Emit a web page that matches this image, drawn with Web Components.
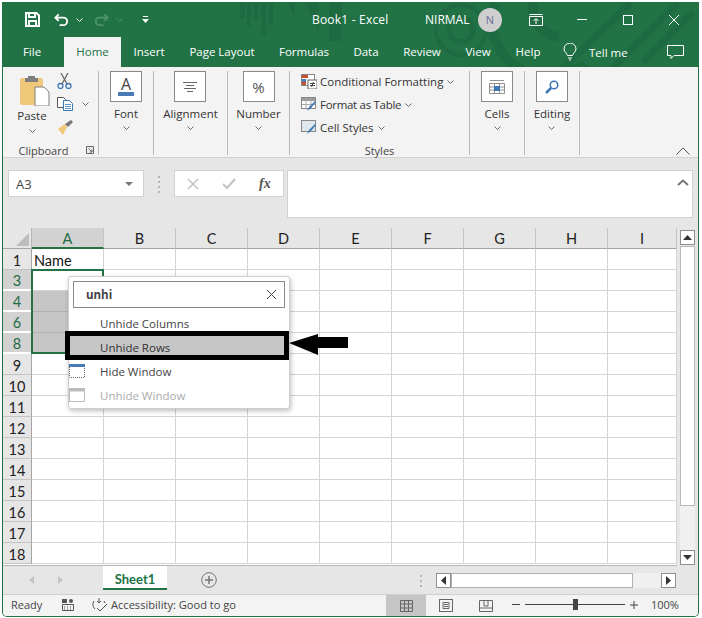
<!DOCTYPE html>
<html>
<head>
<meta charset="utf-8">
<title>Book1 - Excel</title>
<style>
  html, body { margin: 0; background: #fff; }
  body { width: 702px; height: 618px; overflow: hidden; font-family: "Open Sans", sans-serif; font-size: 11.5px; color: #333; }
</style>
</head>
<body>
<excel-window>
  <excel-titlebar></excel-titlebar>
  <excel-ribbon></excel-ribbon>
  <excel-formula-bar></excel-formula-bar>
  <excel-sheet></excel-sheet>
  <excel-sheet-tabs></excel-sheet-tabs>
  <excel-status-bar></excel-status-bar>
</excel-window>

<script>
const CHEV = `<svg width="7" height="4" viewBox="0 0 7 4"><path d="M.5.5l3 3 3-3" fill="none" stroke="#666"/></svg>`;

class ExcelWindow extends HTMLElement {
  constructor() {
    super();
    this.attachShadow({ mode: 'open' });
    this.shadowRoot.innerHTML = `
      <style>
        :host {
          display: flex;
          flex-direction: column;
          box-sizing: border-box;
          position: relative;
          width: 697px;
          height: 615px;
          margin: 2px 0 0 2px;
          border: 1px solid #217346;
          border-top: 0;
          border-radius: 0 0 5px 5px;
          overflow: hidden;
          background: #e6e6e6;
        }
      </style>
      <slot></slot>
    `;
  }
}

class ExcelTitlebar extends HTMLElement {
  constructor() {
    super();
    this.attachShadow({ mode: 'open' });
    const tabs = [['File', 58], ['Home', 57], ['Insert', 56], ['Page Layout', 90], ['Formulas', 74], ['Data', 50], ['Review', 62], ['View', 50], ['Help', 50]];
    this.shadowRoot.innerHTML = `
      <style>
        :host { display: block; position: relative; height: 65px; background: #217346; color: #fff; flex: none; }
        .art { position: absolute; left: 0; top: 0; }
        .top { position: relative; display: flex; align-items: center; height: 35px; }
        .qat { display: flex; align-items: center; margin-left: 22px; width: 285px; flex: none; }
        .title { width: 80px; flex: none; font-size: 12px; letter-spacing: .2px; white-space: nowrap; margin-left: 2px; }
        .user { margin-left: 33px; font-size: 12px; width: 53px; flex: none; }
        .avatar { width: 24px; height: 24px; border-radius: 50%; background: #cfcfcf; color: #6a6a9a; font-size: 11px;
          display: flex; align-items: center; justify-content: center; flex: none; }
        .win { display: flex; margin-left: 11px; align-items: center; }
        .win span { width: 46px; display: flex; justify-content: center; }
        .tabs { position: relative; display: flex; height: 30px; align-items: center; }
        .tab { height: 30px; line-height: 30px; text-align: center; font-size: 11.500px; flex: none; }
        .tab.on { background: #f3f3f3; color: #217346; margin-left: 3px; }
        .tell { display: flex; align-items: center; gap: 12px; margin-left: 10px; font-size: 11.500px; }
      </style>
      <svg class="art" width="695" height="65" fill="#1e6a41">
        <rect x="237" y="1" width="5" height="15"/><rect x="244" y="1" width="4" height="23"/><rect x="251" y="1" width="4" height="18"/>
        <rect x="258" y="1" width="5" height="33"/><rect x="266" y="1" width="4" height="22"/>
        <path d="M285 1h7v13zM303 1h13v30zM326 1h13v38h-13z"/>
        <g fill="none" stroke="#1e6a41">
          <circle cx="458" cy="28" r="12" stroke-width="5"/><circle cx="458" cy="28" r="25" stroke-width="4"/>
          <path d="M492 1a56 56 0 0 0 90 60M530 1a30 30 0 0 0 26 34" stroke-width="10"/>
          <path d="M560 66L628 1M610 66L675 1M640 60L690 10" stroke-width="7"/>
        </g>
      </svg>
      <div class="top">
        <div class="qat">
          <svg width="15" height="15" viewBox="0 0 15 15" fill="none" stroke="#fff" stroke-width="2"><path d="M1 1h10.500l2.500 2.500V14H1zM4 1v4h6V1M4 14V9h7v5"/></svg>
          <svg style="margin-left:14px" width="15" height="14" viewBox="0 0 16 14" fill="none" stroke="#fff" stroke-width="2"><path d="M5 1L1.500 4.500 5 8M2 4.500h8a4 4 0 0 1 0 8H6"/></svg>
          <svg style="margin-left:7px" width="7" height="4" viewBox="0 0 7 4"><path d="M.5.5l3 3 3-3" fill="none" stroke="#fff"/></svg>
          <svg style="margin-left:11px;opacity:.35" width="15" height="14" viewBox="0 0 16 14" fill="none" stroke="#9fd0b4" stroke-width="2"><path d="M11 1l3.500 3.500L11 8M14 4.500H6a4 4 0 0 0 0 8h4"/></svg>
          <svg style="margin-left:7px;opacity:.35" width="7" height="4" viewBox="0 0 7 4"><path d="M.5.5l3 3 3-3" fill="none" stroke="#9fd0b4"/></svg>
          <svg style="margin-left:19px" width="7" height="8" viewBox="0 0 7 8" fill="#fff"><rect x="1" width="5" height="1"/><path d="M0 3h7L3.500 7z"/></svg>
        </div>
        <span class="title">Book1 - Excel</span>
        <span class="user">NIRMAL</span>
        <span class="avatar">N</span>
        <div class="win">
          <span><svg width="14" height="12" viewBox="0 0 14 12" fill="none" stroke="#fff"><path d="M.5 2.500h13v9H.5zM.5.5h13M7 10V5M4.500 7L7 4.500 9.500 7"/></svg></span>
          <span><svg width="10" height="1"><rect width="10" height="1" fill="#fff"/></svg></span>
          <span><svg width="10" height="10" fill="none" stroke="#fff"><rect x=".5" y=".5" width="9" height="9"/></svg></span>
          <span><svg width="10" height="10" fill="none" stroke="#fff"><path d="M0 0l10 10M10 0L0 10"/></svg></span>
        </div>
      </div>
      <div class="tabs">
        ${tabs.map(([t, w]) => `<div class="tab ${t === 'Home' ? 'on' : ''}" style="width:${w}px">${t}</div>`).join('')}
        <div class="tell">
          <svg width="14" height="18" viewBox="0 0 14 18" fill="none" stroke="#fff"><path d="M4.500 12.500C4 10 1 9 1 6a6 6 0 0 1 12 0c0 3-3 4-3.500 6.500zM5 15h4M6 17h2"/></svg>
          <span>Tell me</span>
        </div>
        <svg style="margin-left:39px" width="17" height="15" viewBox="0 0 17 15" fill="none" stroke="#fff"><path d="M.5.5h16v10H7l-3 3v-3H.5z"/></svg>
      </div>
    `;
  }
}

class RibbonGroup extends HTMLElement {
  constructor() {
    super();
    this.attachShadow({ mode: 'open' });
    this.shadowRoot.innerHTML = `
      <style>
        :host { display: flex; flex-direction: column; box-sizing: border-box; height: 84px; margin-top: 4px; border-right: 1px solid #b9b9b9; flex: none; }
        .body { flex: 1; display: flex; min-height: 0; justify-content: center; }
        .label { height: 16px; margin-bottom: -4px; line-height: 15px; text-align: center; font-size: 11px; position: relative; color: #444; padding-right: ${this.getAttribute('pad') || 0}px; }
        ::slotted([slot=launcher]) { position: absolute; right: 4px; top: 3px; }
      </style>
      <div class="body"><slot></slot></div>
      <div class="label">${this.getAttribute('label') || ''}<slot name="launcher"></slot></div>
    `;
  }
}

class RibbonCollapsed extends HTMLElement {
  constructor() {
    super();
    this.attachShadow({ mode: 'open' });
    this.shadowRoot.innerHTML = `
      <style>
        :host { display: flex; flex-direction: column; align-items: center; }
        .box { width: 30px; height: 29px; border: 1px solid #8a8a8a; background: #fff; display: flex; flex-direction: column; align-items: center; justify-content: center; font-size: 15px; color: #555; }
        .label { margin-top: 3px; height: 17px; line-height: 17px; font-size: 11.500px; }
        .chev { line-height: 0; margin-top: 4px; }
      </style>
      <div class="box"><slot></slot></div>
      <div class="label">${this.getAttribute('label')}</div>
      <div class="chev">${CHEV}</div>
    `;
  }
}

class RibbonStyleRow extends HTMLElement {
  constructor() {
    super();
    this.attachShadow({ mode: 'open' });
    this.shadowRoot.innerHTML = `
      <style>
        :host { display: flex; align-items: center; height: 23px; gap: 3px; font-size: 11.500px; white-space: nowrap; }
        .chev { margin-left: 1px; line-height: 0; }
        svg { display: block; }
      </style>
      <slot></slot>
      <span>${this.getAttribute('label')}</span>
      <span class="chev">${CHEV}</span>
    `;
  }
}

class ExcelRibbon extends HTMLElement {
  constructor() {
    super();
    this.attachShadow({ mode: 'open' });
    this.shadowRoot.innerHTML = `
      <style>
        :host { display: flex; position: relative; height: 91px; flex: none; background: #f3f3f3; border-bottom: 1px solid #d2d2d2; box-sizing: border-box; }
        .paste { display: flex; flex-direction: column; align-items: center; width: 50px; margin-left: 4px; }
        .paste .lab { font-size: 11.500px; margin-top: 2px; line-height: 16px; }
        .chev { line-height: 0; }
        .small { display: flex; flex-direction: column; align-items: flex-start; gap: 8px; width: 38px; padding-top: 2px; }
        .copy { display: flex; align-items: center; gap: 9px; }
        .styles { display: flex; flex-direction: column; align-items: flex-start; width: 100%; padding: 0 0 0 11px; margin-top: -1px; }
        .collapse { position: absolute; right: 8px; bottom: 2px; }
        .fontA { font-size: 16px; line-height: 14px; color: #444; }
        .fontbar { width: 16px; height: 4px; background: #4a7ab5; margin-top: 1px; }
      </style>
      <ribbon-group label="Clipboard" pad="14" style="width:96px">
        <div style="display:flex;width:100%">
          <div class="paste">
            <svg width="30" height="31" viewBox="0 0 30 31" style="margin:4px 0 0 6px">
              <rect x="0" y="3" width="23" height="27" rx="2" fill="#f0c87a"/>
              <path d="M8 3V1h7v2h3v4H5V3z" fill="#7f7f7f"/>
              <path d="M15 12h9l5 5v14H15z" fill="#fff" stroke="#7f7f7f"/>
            </svg>
            <span class="lab">Paste</span>
            <span class="chev" style="margin-top:5px">${CHEV}</span>
          </div>
          <div class="small">
            <svg width="15" height="16" viewBox="0 0 15 16" fill="none"><path d="M4 0l6 11M11 0L5 11" stroke="#666" stroke-width="1.300"/><circle cx="3.500" cy="13" r="2.500" stroke="#3b78b5" stroke-width="1.300"/><circle cx="11.500" cy="13" r="2.500" stroke="#3b78b5" stroke-width="1.300"/></svg>
            <div class="copy">
              <svg width="16" height="14" viewBox="0 0 16 14" fill="#fff" stroke="#555"><path d="M.5.5h6l2 2v8h-8z"/><path d="M6.500 3.500h6l3 3v7h-9z" stroke="#3b78b5"/><path d="M8 7.500h6M8 9.500h6M8 11.500h6" stroke="#3b78b5" stroke-width=".8"/></svg>
              ${CHEV}
            </div>
            <svg style="margin-top:1px" width="16" height="15" viewBox="0 0 16 15"><path d="M8 4L1 9l5 6 4-8z" fill="#f0c87a"/><path d="M8 4l3 3 5-5-2-2z" fill="#777"/></svg>
          </div>
        </div>
        <svg slot="launcher" width="8" height="8" viewBox="0 0 8 8" fill="none" stroke="#666"><path d="M.5 7.500v-7h7v7zM2.500 2.500l3.500 3.500M6 3.500V6H3.500"/></svg>
      </ribbon-group>

      <ribbon-group style="width:55px">
        <ribbon-collapsed label="Font">
          <span class="fontA">A</span><span class="fontbar"></span>
        </ribbon-collapsed>
      </ribbon-group>
      <ribbon-group style="width:74px">
        <ribbon-collapsed label="Alignment">
          <svg width="14" height="10" viewBox="0 0 14 10" stroke="#666"><path d="M0 .5h14M3 3.500h8M1 6.500h12M4 9.500h6"/></svg>
        </ribbon-collapsed>
      </ribbon-group>
      <ribbon-group style="width:62px">
        <ribbon-collapsed label="Number">%</ribbon-collapsed>
      </ribbon-group>

      <ribbon-group label="Styles" style="width:180px">
        <div class="styles">
          <ribbon-style-row label="Conditional Formatting">
            <svg width="16" height="15" viewBox="0 0 16 15"><rect x=".5" y=".5" width="13" height="11" fill="#fff" stroke="#888"/><rect x="1" y="1" width="6" height="3" fill="#c8502c"/><rect x="1" y="5" width="4" height="3" fill="#4a7ab5"/><rect x="1" y="8" width="4" height="3" fill="#c8502c"/><rect x="7" y="6" width="9" height="9" fill="#fff" stroke="#666"/><path d="M9 9.500h5M9 11.500h5M12.500 8l-2 5" stroke="#444" fill="none"/></svg>
          </ribbon-style-row>
          <ribbon-style-row label="Format as Table" style="letter-spacing:-.3px">
            <svg width="16" height="15" viewBox="0 0 16 15"><rect x=".5" y=".5" width="14" height="11" fill="#fff" stroke="#888"/><rect x="1" y="1" width="13" height="3" fill="#999"/><path d="M5 1v10M10 1v10M1 7.500h13" stroke="#aaa"/><path d="M6 14l2-4 6-6 1 1-5 6z" fill="#3b78b5"/></svg>
          </ribbon-style-row>
          <ribbon-style-row label="Cell Styles">
            <svg width="16" height="15" viewBox="0 0 16 15"><rect x=".5" y=".5" width="14" height="11" fill="#dfe6ee" stroke="#888"/><path d="M6 14l2-4 6-6 1 1-5 6z" fill="#3b78b5"/></svg>
          </ribbon-style-row>
        </div>
      </ribbon-group>
      <ribbon-group style="width:55px">
        <ribbon-collapsed label="Cells">
          <svg width="16" height="16" viewBox="0 0 16 16" fill="none" stroke="#777"><path d="M.5 4.500h15v10H.5zM.5 8h15M.5 11h15M5.500 4.500v10M10.500 4.500v10M1 1.500h14" stroke-width=".8"/><rect x="5" y="7" width="6" height="5" fill="#3b78b5" stroke="none"/></svg>
        </ribbon-collapsed>
      </ribbon-group>
      <ribbon-group style="width:55px">
        <ribbon-collapsed label="Editing">
          <svg width="14" height="14" viewBox="0 0 14 14" fill="none" stroke="#3b78b5"><circle cx="9" cy="5" r="3.800" stroke-width="1.500"/><path d="M6 8l-5 5" stroke-width="2.500"/></svg>
        </ribbon-collapsed>
      </ribbon-group>
      <svg class="collapse" width="14" height="8" viewBox="0 0 14 8" fill="none" stroke="#555"><path d="M.5 7.500L7 1l6.500 6.500"/></svg>
    `;
  }
}

class ExcelFormulaBar extends HTMLElement {
  constructor() {
    super();
    this.attachShadow({ mode: 'open' });
    this.shadowRoot.innerHTML = `
      <style>
        :host { display: flex; box-sizing: border-box; height: 70px; flex: none; padding: 12px 5px 0 5px; align-items: flex-start; font-size: 13px; }
        .box { background: #fff; border: 1px solid #d0d0d0; box-sizing: border-box; height: 27px; display: flex; align-items: center; }
        .name { width: 136px; padding: 0 7px; justify-content: space-between; color: #444; }
        .name i { border: 4px solid transparent; border-top: 4px solid #777; border-bottom: 0; margin-right: 3px; }
        .dots { width: 30px; display: flex; flex-direction: column; gap: 3px; align-items: center; padding-top: 6px; }
        .dots b { width: 2px; height: 2px; background: #b5b5b5; }
        .fx { width: 110px; padding: 0 10px 0 12px; gap: 23px; }
        .fx em { color: #555; font: italic 700 14px "Liberation Serif", serif; }
        .input { width: 406px; height: 48px; margin-left: 3px; position: relative; }
        .input svg { position: absolute; right: 3px; top: 8px; }
      </style>
      <div class="box name"><span>A3</span><i></i></div>
      <div class="dots"><b></b><b></b><b></b><b></b></div>
      <div class="box fx">
        <svg width="12" height="12" viewBox="0 0 12 12" stroke="#c4c4c4" stroke-width="1.600" fill="none"><path d="M1 1l10 10M11 1L1 11"/></svg>
        <svg width="14" height="12" viewBox="0 0 14 12" stroke="#c4c4c4" stroke-width="2.200" fill="none"><path d="M1 6l4 4 8-9"/></svg>
        <em>fx</em>
      </div>
      <div class="box input"><svg width="12" height="7" viewBox="0 0 12 7" fill="none" stroke="#777" stroke-width="2"><path d="M1 6l5-4.500L11 6"/></svg></div>
    `;
  }
}

class ExcelSheet extends HTMLElement {
  constructor() {
    super();
    this.attachShadow({ mode: 'open' });
    const cols = 'ABCDEFGHI'.split('');
    const rows = [1, 3, 4, 6, 8, 9, 10, 11, 12, 13, 14, 15, 16, 17, 18];
    const head = cols.map((c, i) => `<div class="ch ${i === 0 ? 'sel' : ''}">${c}</div>`).join('');
    const body = rows.map(r => {
      const isSel = r >= 3 && r <= 8;
      const cells = cols.map((c, i) => {
        const cls = (i === 0 && (r === 4 || r === 6 || r === 8)) ? 'cell gray' : 'cell';
        const txt = (i === 0 && r === 1) ? 'Name' : '';
        return `<div class="${cls}">${txt}</div>`;
      }).join('');
      return `<div class="rh ${isSel ? 'sel' : ''}">${r}</div>${cells}`;
    }).join('');
    this.shadowRoot.innerHTML = `
      <style>
        :host { display: flex; position: relative; height: 338px; flex: none; }
        .grid { display: grid; grid-template-columns: 29px repeat(8, 72px) 69px; grid-template-rows: 21px repeat(15, 21px);
          width: 674px; height: 337px; overflow: hidden; border-bottom: 1px solid #b5b5b5; background: #fff;
          font-family: Lato, sans-serif; font-size: 14.500px; color: #111; flex: none; }
        .corner { background: #e6e6e6; border-right: 1px solid #b5b5b5; border-bottom: 1px solid #a5a5a5; position: relative; box-sizing: border-box; }
        .corner::after { content: ''; position: absolute; right: 2px; bottom: 2px; border-left: 13px solid transparent; border-bottom: 13px solid #bdbdbd; }
        .ch, .rh { background: #e6e6e6; display: flex; align-items: center; justify-content: center; box-sizing: border-box; color: #222; padding-top: 1px; }
        .ch { border-right: 1px solid #c4c4c4; border-bottom: 1px solid #a5a5a5; }
        .rh { border-bottom: 1px solid #c4c4c4; border-right: 1px solid #a5a5a5; padding-top: 2px; }
        .ch.sel { background: #d2d2d2; border-bottom: 2px solid #217346; color: #1e6b41; }
        .rh.sel { background: #d2d2d2; color: #1e6b41; border-bottom: 2px solid #fff; }
        .cell { box-sizing: border-box; border-right: 1px solid #d4d4d4; border-bottom: 1px solid #d4d4d4; padding: 2px 2px 0; display: flex; align-items: center; white-space: nowrap; }
        .gray { background: #c6c6c6; border-right-color: #c6c6c6; border-bottom-color: #b0b0b0; }
        .selbox { position: absolute; left: 28px; top: 41px; width: 73px; height: 85px; border: 2px solid #217346; box-sizing: border-box; }
        .vbar { display: flex; flex-direction: column; margin-left: 3px; width: 15px; flex: none; height: 337px; padding-top: 2px; box-sizing: border-box; }
        .btn { width: 15px; height: 15px; box-sizing: border-box; border: 1px solid #8f8f8f; background: #fff; display: flex; align-items: center; justify-content: center; flex: none; }
        .thumb { height: 260px; background: #fff; border: 1px solid #b8b8b8; box-sizing: border-box; margin-top: 1px; flex: none; }
        .track { flex: 1; background: #f0f0f0; }
      </style>
      <div class="grid"><div class="corner"></div>${head}${body}</div>
      <div class="selbox"></div>
      <div class="vbar">
        <div class="btn"><svg width="9" height="5"><path d="M4.500 0L9 5H0z" fill="#333"/></svg></div>
        <div class="thumb"></div>
        <div class="track"></div>
        <div class="btn"><svg width="9" height="5"><path d="M4.500 5L9 0H0z" fill="#333"/></svg></div>
      </div>
      <search-menu></search-menu>
    `;
  }
}

class SearchMenu extends HTMLElement {
  constructor() {
    super();
    this.attachShadow({ mode: 'open' });
    this.shadowRoot.innerHTML = `
      <style>
        :host { position: absolute; left: 65px; top: 48px; width: 222px; height: 133px; box-sizing: border-box; background: #fff;
          border: 1px solid #cfcfcf; border-radius: 3px; box-shadow: 1px 2px 5px rgba(0,0,0,.25);
          font-family: "Open Sans", sans-serif; font-size: 11.500px; color: #444; padding: 4px 4px 0; }
        .search { height: 27px; box-sizing: border-box; border: 1px solid #8a8a8a; display: flex; align-items: center; justify-content: space-between; padding: 0 8px 0 12px; font-weight: 700; color: #444; }
        .item { height: 24px; display: flex; align-items: center; padding-left: 29px; margin: 0 -2px; position: relative; }
        .items { margin-top: 3px; }
        .item svg { position: absolute; left: -2px; top: 5px; }
        .hot { background: #c6c6c6; margin-left: -4px; padding-left: 31px; color: #333; }
        .off { color: #aaa; }
        .ring { position: absolute; left: -4px; top: 54px; width: 224px; height: 29px; box-sizing: border-box; border: 5px solid #000; }
        .arrow { position: absolute; left: 220px; top: 57px; }
      </style>
      <div class="search"><span>unhi</span><svg width="9" height="9" stroke="#444"><path d="M0 0l9 9M9 0L0 9"/></svg></div>
      <div class="items">
        <div class="item">Unhide Columns</div>
        <div class="item hot">Unhide Rows</div>
        <div class="item">
          <svg width="16" height="14" viewBox="0 0 16 14"><rect width="16" height="3" fill="#4a7ab5"/><path d="M.5 3v10.500h15V3" fill="none" stroke="#666" stroke-dasharray="1 1"/></svg>
          Hide Window
        </div>
        <div class="item off">
          <svg width="16" height="14" viewBox="0 0 16 14"><rect width="16" height="3" fill="#bbb"/><rect x=".5" y="3" width="15" height="10.500" fill="none" stroke="#bbb"/></svg>
          Unhide Window
        </div>
      </div>
      <div class="ring"></div>
      <svg class="arrow" width="60" height="21" viewBox="0 0 60 21"><path d="M0 9L29 0v3h30v11H29v7z" fill="#000"/></svg>
    `;
  }
}

class ExcelSheetTabs extends HTMLElement {
  constructor() {
    super();
    this.attachShadow({ mode: 'open' });
    this.shadowRoot.innerHTML = `
      <style>
        :host { display: flex; align-items: flex-start; height: 29px; flex: none; background: #e6e6e6; border-bottom: 1px solid #d0d0d0; box-sizing: border-box; position: relative; }
        .nav { width: 100px; display: flex; padding: 10px 0 0 26px; gap: 24px; box-sizing: border-box; }
        .sheet { width: 64px; height: 24px; padding-top: 3px; background: #fff; border-bottom: 2px solid #217346; box-sizing: border-box;
          font: 700 13px Lato, sans-serif; color: #217346; display: flex; align-items: center; justify-content: center; }
        .plus { margin: 6px 0 0 34px; }
        .dots { margin-left: 203px; padding-top: 9px; display: flex; flex-direction: column; gap: 3px; }
        .dots b { width: 2px; height: 2px; background: #b5b5b5; }
        .hbar { display: flex; margin: 7px 0 0 14px; width: 240px; height: 15px; }
        .btn { width: 15px; height: 15px; box-sizing: border-box; border: 1px solid #8f8f8f; background: #fff; display: flex; align-items: center; justify-content: center; flex: none; }
        .thumb { width: 182px; background: #fff; border: 1px solid #b0b0b0; box-sizing: border-box; }
        .track { flex: 1; background: #f0f0f0; }
      </style>
      <div class="nav">
        <svg width="5" height="8"><path d="M5 0v8L0 4z" fill="#c4c4c4"/></svg>
        <svg width="5" height="8"><path d="M0 0v8l5-4z" fill="#c4c4c4"/></svg>
      </div>
      <div class="sheet">Sheet1</div>
      <svg class="plus" width="16" height="16" viewBox="0 0 16 16" fill="none" stroke="#777"><circle cx="8" cy="8" r="7.300"/><path d="M4 8h8M8 4v8" stroke-width="1.500"/></svg>
      <div class="dots"><b></b><b></b><b></b></div>
      <div class="hbar">
        <div class="btn"><svg width="5" height="9"><path d="M0 4.500L5 0v9z" fill="#333"/></svg></div>
        <div class="thumb"></div>
        <div class="track"></div>
        <div class="btn"><svg width="5" height="9"><path d="M5 4.500L0 0v9z" fill="#333"/></svg></div>
      </div>
    `;
  }
}

class ExcelStatusBar extends HTMLElement {
  constructor() {
    super();
    this.attachShadow({ mode: 'open' });
    this.shadowRoot.innerHTML = `
      <style>
        :host { display: flex; align-items: center; height: 21px; flex: 1; background: #f3f3f3; font-size: 11px; color: #444; padding: 0 0 2px 8px; box-sizing: border-box; }
        .ready { width: 51px; }
        .acc { margin-left: 17px; width: 295px; display: flex; align-items: center; gap: 3px; white-space: nowrap; flex: none; }
        .acc span { font-size: 11.100px; }
        .view { width: 40px; height: 21px; display: flex; align-items: center; justify-content: center; flex: none; align-self: flex-start; }
        .view.on { background: #c6c6c6; }
        .zoom { display: flex; align-items: center; margin-left: 6px; }
        .slider { width: 100px; height: 1px; background: #444; position: relative; margin: 0 5px; }
        .slider i { position: absolute; left: 48px; top: -5px; width: 5px; height: 11px; background: #444; }
        .pct { margin-left: 13px; }
      </style>
      <span class="ready">Ready</span>
      <svg width="12" height="12" viewBox="0 0 12 12" fill="#555"><rect width="5" height="4"/><circle cx="9" cy="2" r="2"/><path d="M.5 5.500h11v6H.5zM2 8h1M5 8h1M8 8h1M2 10h1M5 10h1M8 10h1" fill="none" stroke="#555"/></svg>
      <div class="acc">
        <svg width="17" height="15" viewBox="0 0 17 15" fill="none" stroke="#555"><path d="M3 4a6 6 0 0 0 1 8M8 1v5M6 4l2 2 2-2M13 4l1 2M6 11l3 3 7-7"/></svg>
        <span>Accessibility: Good to go</span>
      </div>
      <div class="view on"><svg width="13" height="12" fill="none" stroke="#666"><path d="M.5.500h12v11H.5zM4.500.500v11M8.500.500v11M.5 4h12M.5 8h12"/></svg></div>
      <div class="view"><svg width="14" height="13" fill="none" stroke="#666"><rect x=".5" y=".5" width="13" height="12"/><path d="M4 3.500h6v6H4zM5 5.500h4M5 7.500h4"/></svg></div>
      <div class="view"><svg width="14" height="12" fill="none" stroke="#666"><path d="M.5.500h13v11H.5zM.5 8h13M5 .5V6h4V.5" /></svg></div>
      <div class="zoom">
        <svg width="8" height="1"><rect width="8" height="1" fill="#444"/></svg>
        <div class="slider"><i></i></div>
        <svg width="8" height="8" stroke="#444"><path d="M0 4h8M4 0v8"/></svg>
        <span class="pct">100%</span>
      </div>
    `;
  }
}

customElements.define('excel-window', ExcelWindow);
customElements.define('excel-titlebar', ExcelTitlebar);
customElements.define('ribbon-group', RibbonGroup);
customElements.define('ribbon-collapsed', RibbonCollapsed);
customElements.define('ribbon-style-row', RibbonStyleRow);
customElements.define('excel-ribbon', ExcelRibbon);
customElements.define('excel-formula-bar', ExcelFormulaBar);
customElements.define('excel-sheet', ExcelSheet);
customElements.define('search-menu', SearchMenu);
customElements.define('excel-sheet-tabs', ExcelSheetTabs);
customElements.define('excel-status-bar', ExcelStatusBar);
</script>
</body>
</html>
